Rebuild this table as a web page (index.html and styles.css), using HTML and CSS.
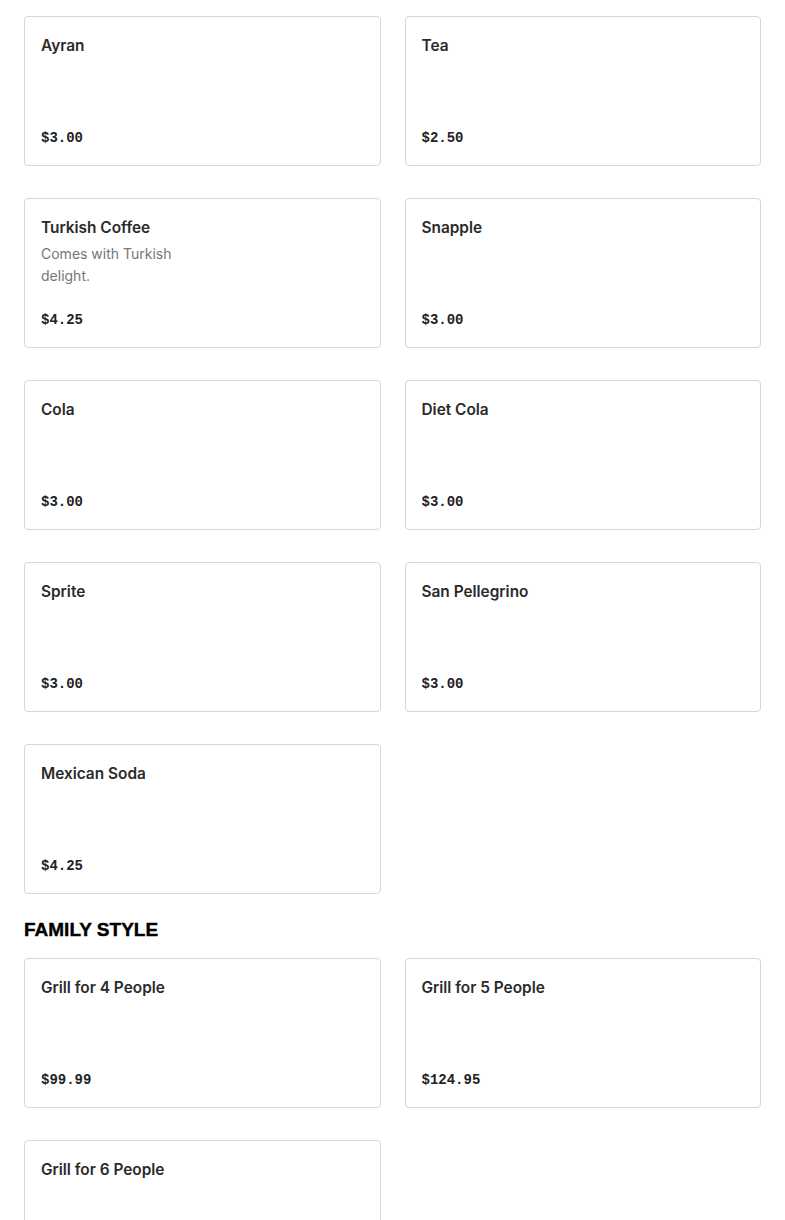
FILE: index.html
```html
<!DOCTYPE html>
<html lang="en">
<head>
<meta charset="utf-8">
<title>Menu</title>
<link rel="stylesheet" href="styles.css">
</head>
<body>
<main class="menu">
  <section class="section">
    <div class="grid">
      <div class="card"><div class="name">Ayran</div><div class="price">$3.00</div></div>
      <div class="card"><div class="name">Tea</div><div class="price">$2.50</div></div>
      <div class="card"><div class="name">Turkish Coffee</div><div class="desc">Comes with Turkish delight.</div><div class="price">$4.25</div></div>
      <div class="card"><div class="name">Snapple</div><div class="price">$3.00</div></div>
      <div class="card"><div class="name">Cola</div><div class="price">$3.00</div></div>
      <div class="card"><div class="name">Diet Cola</div><div class="price">$3.00</div></div>
      <div class="card"><div class="name">Sprite</div><div class="price">$3.00</div></div>
      <div class="card"><div class="name">San Pellegrino</div><div class="price">$3.00</div></div>
      <div class="card"><div class="name">Mexican Soda</div><div class="price">$4.25</div></div>
    </div>
  </section>
  <section class="section">
    <h2 class="section-title">FAMILY STYLE</h2>
    <div class="grid">
      <div class="card"><div class="name">Grill for 4 People</div><div class="price">$99.99</div></div>
      <div class="card"><div class="name">Grill for 5 People</div><div class="price">$124.95</div></div>
      <div class="card"><div class="name">Grill for 6 People</div><div class="price">$149.95</div></div>
    </div>
  </section>
</main>
</body>
</html>
```
FILE: styles.css
```css
* { box-sizing: border-box; }
html, body { margin: 0; padding: 0; background: #fff; }
body {
  font-family: "Inter", "Liberation Sans", Arial, sans-serif;
  color: #222;
}
.menu {
  padding: 16px 24px 24px;
}
.section-title {
  margin: 24px 0 16px;
  font-family: "Liberation Sans", Arial, sans-serif;
  font-weight: 700;
  font-size: 19px;
  line-height: 24px;
  color: #000;
  -webkit-text-stroke: 0.4px #000;
}
.grid {
  display: grid;
  grid-template-columns: 1fr 1fr;
  column-gap: 24px;
  row-gap: 32px;
}
.card {
  height: 150px;
  border: 1px solid #d6d6d6;
  border-radius: 4px;
  padding: 16px;
  display: flex;
  flex-direction: column;
}
.name {
  padding-top: 1px;
  font-size: 15.4px;
  font-weight: 600;
  line-height: 24px;
  color: #2a2a2a;
}
.desc {
  margin-top: 3px;
  max-width: 160px;
  font-size: 14px;
  line-height: 22px;
  color: #767676;
}
.price {
  margin-top: auto;
  font-family: "Liberation Mono", "DejaVu Sans Mono", monospace;
  font-weight: 700;
  font-size: 14px;
  line-height: 22px;
  color: #222;
}
```
